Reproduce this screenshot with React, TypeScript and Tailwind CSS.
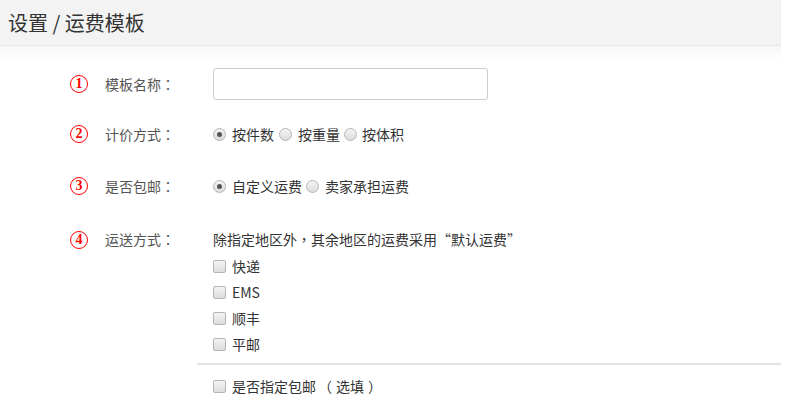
import React from "react";

const font = { fontFamily: '"Noto Sans CJK SC", "Noto Sans", sans-serif' };
const tc = { fontFamily: '"Noto Sans CJK TC", "Noto Sans CJK SC", sans-serif' };

function Num({ n }: { n: string }) {
  return (
    <div className="ml-[70px] flex h-[18px] w-[18px] items-center justify-center rounded-full border-[1.5px] border-[#ff0000] text-[14px] font-bold leading-none text-[#ff0000]" style={{ fontFamily: '"Liberation Serif", serif' }}>
      {n}
    </div>
  );
}

function Radio({ checked }: { checked?: boolean }) {
  return (
    <span className="flex h-[13px] w-[13px] items-center justify-center rounded-full border border-[#b5b5b5] bg-gradient-to-b from-[#f4f4f4] to-[#dcdcdc]">
      {checked && <span className="h-[5px] w-[5px] rounded-full bg-[#555]" />}
    </span>
  );
}

function Check() {
  return <span className="h-[13px] w-[13px] rounded-[2px] border border-[#b5b5b5] bg-gradient-to-b from-[#f4f4f4] to-[#dcdcdc]" />;
}

function Label({ text }: { text: string }) {
  return (
    <div className="ml-[17px] w-[108px] text-[14px] text-[#555]">
      {text}
      <span style={tc}>：</span>
    </div>
  );
}

function Row({ n, label, children, cls }: { n: string; label: string; children: React.ReactNode; cls: string }) {
  return (
    <div className={`flex items-center ${cls}`}>
      <Num n={n} />
      <Label text={label} />
      {children}
    </div>
  );
}

export default function App() {
  return (
    <div className="relative h-[417px] w-[801px] overflow-hidden bg-white text-[#333]" style={font}>
      <div className="w-[781px]">
        <div className="flex h-[46px] items-center border-b border-[#e8e8e8] bg-[#f3f3f3] pl-[8px] text-[20px] text-[#333]">
          设置 / 运费模板
        </div>
        <div className="h-[14px] bg-gradient-to-b from-[#f6f6f6] to-white" />
      </div>
      <div className="flex flex-col">
        <Row n="1" label="模板名称" cls="mt-[8px] h-[32px]">
          <input className="h-[32px] w-[275px] rounded-[3px] border border-[#ccc] outline-none" />
        </Row>
        <Row n="2" label="计价方式" cls="mt-[20px] h-[28px]">
          <div className="flex items-center text-[14px] text-[#333]">
            <Radio checked />
            <span className="ml-[6px] mr-[5px]">按件数</span>
            <Radio />
            <span className="ml-[6px] mr-[4px]">按重量</span>
            <Radio />
            <span className="ml-[5px]">按体积</span>
          </div>
        </Row>
        <Row n="3" label="是否包邮" cls="mt-[24px] h-[28px]">
          <div className="flex items-center text-[14px] text-[#333]">
            <Radio checked />
            <span className="ml-[6px] mr-[4px]">自定义运费</span>
            <Radio />
            <span className="ml-[6px]">卖家承担运费</span>
          </div>
        </Row>
        <div className="mt-[26px] flex items-start">
          <div className="flex h-[27px] items-center">
            <Num n="4" />
            <Label text="运送方式" />
          </div>
          <div className="flex flex-col text-[14px] text-[#333]">
            <div className="flex h-[27px] items-center">
              除指定地区外<span style={tc}>，</span>其余地区的运费采用“默认运费”
            </div>
            {["快递", "EMS", "顺丰", "平邮"].map((t) => (
              <div key={t} className="flex h-[26px] items-center">
                <Check />
                <span className="ml-[6px]">{t}</span>
              </div>
            ))}
          </div>
        </div>
        <div className="ml-[197px] mt-[6px] w-[584px] border-t-2 border-[#e2e2e2]" />
        <div className="ml-[213px] mt-[8px] flex h-[26px] items-center text-[14px] text-[#333]">
          <Check />
          <span className="ml-[6px] flex items-center">
            是否指定包邮<span className="pl-[2px] pr-[4px]" style={tc}>（</span>选填<span className="pl-[4px]" style={tc}>）</span>
          </span>
        </div>
      </div>
    </div>
  );
}
